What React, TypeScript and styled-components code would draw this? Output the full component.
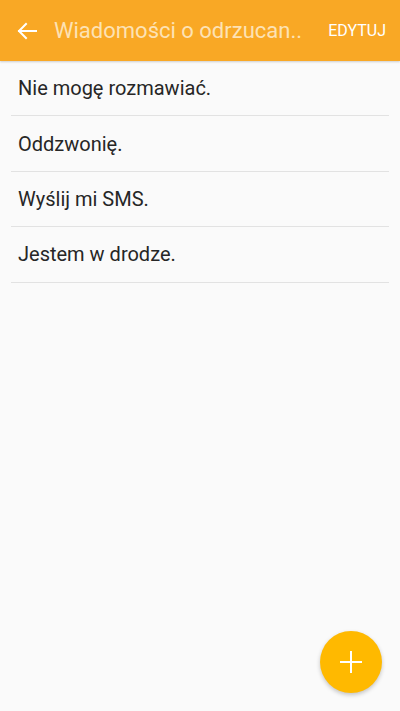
import React from "react";
import styled, { createGlobalStyle } from "styled-components";

const Global = createGlobalStyle`
  html, body { margin: 0; padding: 0; }
  body { background: #fafafa; font-family: Roboto, "Noto Sans", sans-serif; }
  #root { min-height: 711px; }
`;

const Page = styled.div`
  position: relative;
  width: 400px;
  height: 711px;
  background: #fafafa;
  overflow: hidden;
`;

const Toolbar = styled.header`
  height: 61px;
  background: #f9a825;
  display: flex;
  align-items: center;
  padding: 0 14px 0 16px;
  box-shadow: 0 1px 2px rgba(0, 0, 0, 0.18);
  position: relative;
  z-index: 1;
`;

const BackButton = styled.button`
  border: 0;
  background: none;
  padding: 0;
  width: 22px;
  height: 22px;
  display: flex;
  align-items: center;
  justify-content: center;
  color: #fff;
  margin-right: 16px;
`;

const Title = styled.h1`
  flex: 1;
  margin: 0;
  font-size: 22px;
  font-weight: 400;
  color: #fde2b4;
  white-space: nowrap;
  overflow: hidden;
`;

const Action = styled.button`
  border: 0;
  background: none;
  padding: 0;
  font-family: Roboto, sans-serif;
  font-size: 16px;
  font-weight: 400;
  color: #fff;
`;

const List = styled.ul`
  list-style: none;
  margin: 0;
  padding: 0 11px;
`;

const Row = styled.li`
  box-sizing: border-box;
  height: 55.4px;
  display: flex;
  align-items: center;
  padding: 0 7px;
  border-bottom: 1px solid #e2e2e2;
  font-size: 20px;
  color: #262626;
`;

const Fab = styled.button`
  position: absolute;
  right: 18px;
  bottom: 18px;
  width: 62px;
  height: 62px;
  border-radius: 50%;
  border: 0;
  background: #ffb900;
  display: flex;
  align-items: center;
  justify-content: center;
  box-shadow: 0 2px 4px rgba(0, 0, 0, 0.22);
`;

const messages = [
  "Nie mogę rozmawiać.",
  "Oddzwonię.",
  "Wyślij mi SMS.",
  "Jestem w drodze.",
];

export default function App() {
  return (
    <Page>
      <Global />
      <Toolbar>
        <BackButton aria-label="Wstecz">
          <svg width="20" height="18" viewBox="0 0 20 18" fill="none" stroke="#fff" strokeWidth="2" strokeLinecap="square">
            <path d="M2 9 H19" />
            <path d="M9 2 L2 9 L9 16" />
          </svg>
        </BackButton>
        <Title>Wiadomości o odrzucan..</Title>
        <Action>EDYTUJ</Action>
      </Toolbar>
      <List>
        {messages.map((m) => (
          <Row key={m}>{m}</Row>
        ))}
      </List>
      <Fab aria-label="Dodaj">
        <svg width="24" height="24" viewBox="0 0 24 24" stroke="#fff" strokeWidth="2">
          <path d="M12 1 V23 M1 12 H23" />
        </svg>
      </Fab>
    </Page>
  );
}
